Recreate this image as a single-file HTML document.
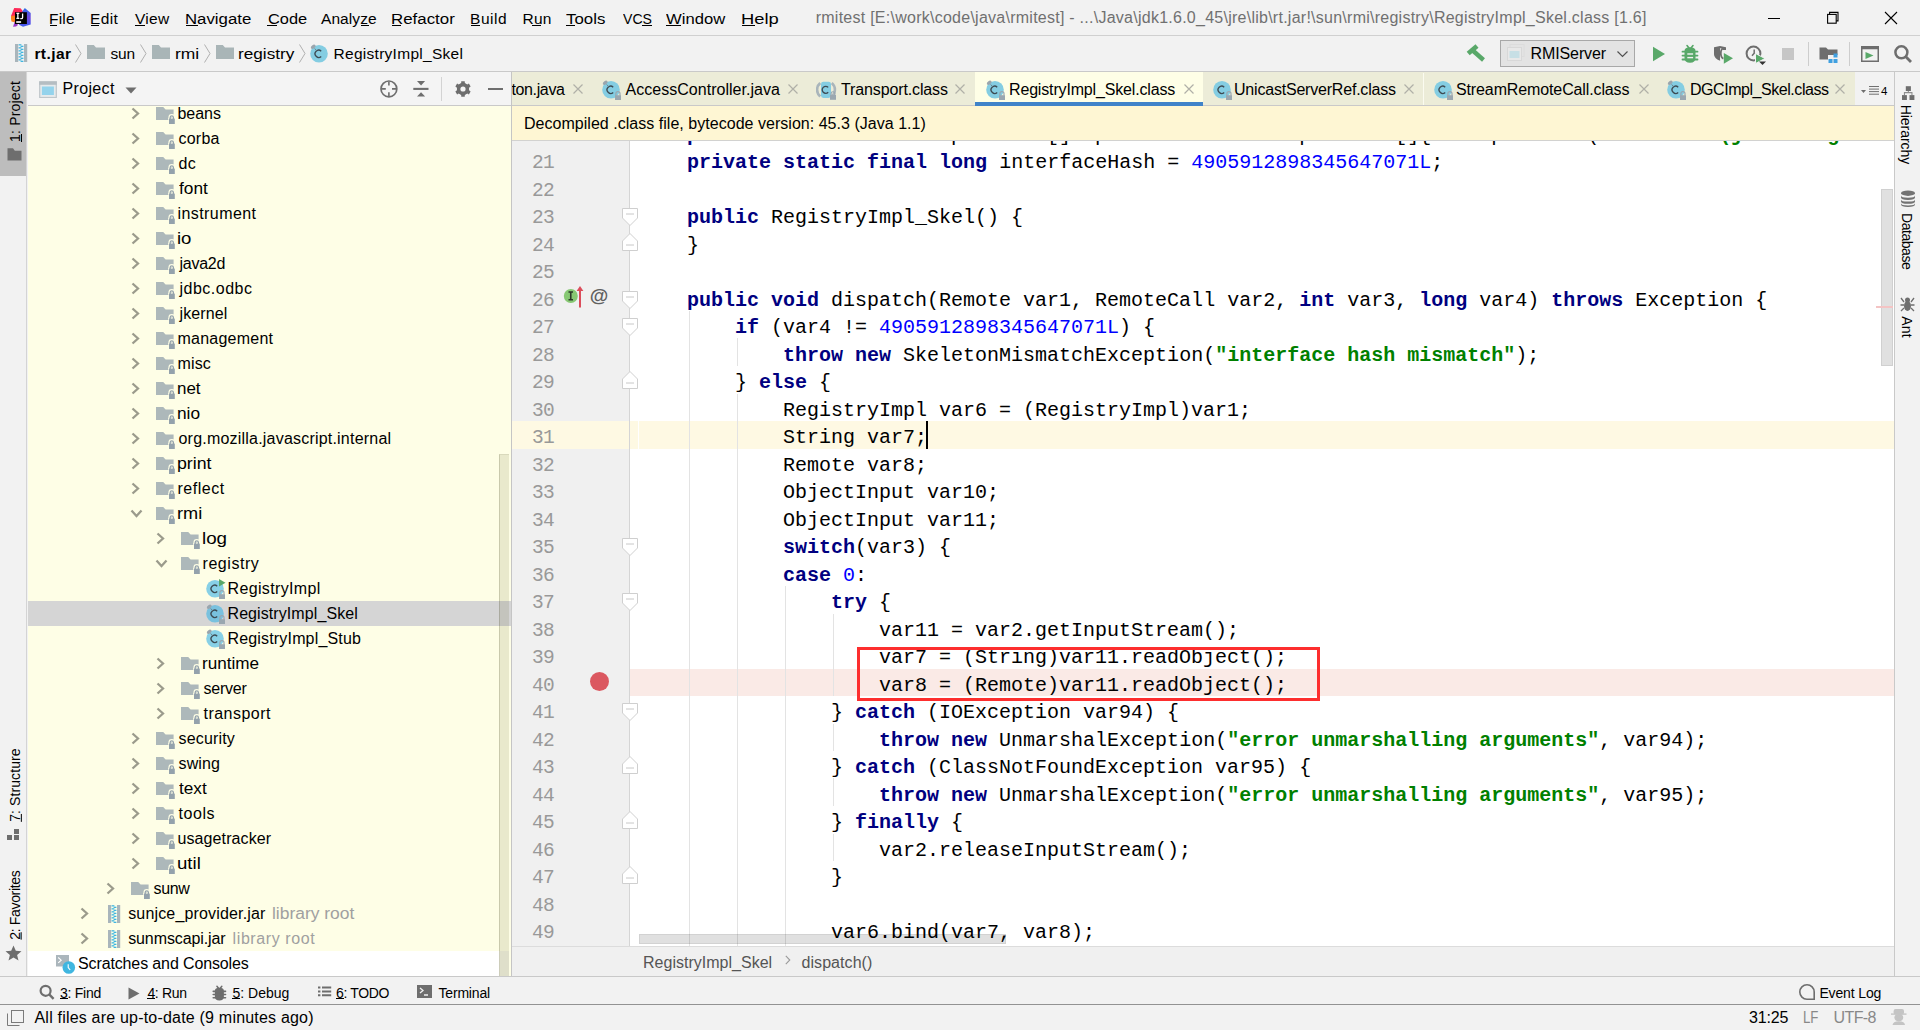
<!DOCTYPE html>
<html><head><meta charset='utf-8'><style>
*{margin:0;padding:0;box-sizing:border-box}
html,body{width:1920px;height:1030px;overflow:hidden;background:#f2f2f2}
body{position:relative;font-family:'Liberation Sans',sans-serif}
.b{position:absolute}
.t{position:absolute;white-space:nowrap;line-height:normal}
.code{position:absolute;font-family:'Liberation Mono',monospace;font-size:20px;white-space:pre;line-height:27.5px}
.k{color:#000080;font-weight:bold}
.n{color:#0000ff}
.s{color:#008000;font-weight:bold}
</style></head><body>
<div class="b" style="left:0px;top:0px;width:1920px;height:35px;background:#f2f2f2;"></div>
<div class="b" style="left:0px;top:35px;width:1920px;height:1px;background:#d0d0d0;"></div>
<svg class="b" style="left:6px;top:4px" width="30" height="28" viewBox="0 0 30 28">
<polygon points="8.2,4.1 14.5,4.3 17.8,8.2 9,12.5 5,12" fill="#fe2857"/>
<polygon points="5,12 9,11.5 9.5,18.5 5.5,17.5 5,15" fill="#fc801d"/>
<polygon points="9,17 12,21 10,22.5 7,22.8" fill="#9939c9"/>
<polygon points="18.8,4.1 24.7,9 24.7,20.4 17,22.8 13,20.8 16,8" fill="url(#lg2)"/>
<defs><linearGradient id="lg2" x1="0" y1="0" x2="0" y2="1"><stop offset="0" stop-color="#2a6ee8"/><stop offset="0.5" stop-color="#7047e0"/><stop offset="1" stop-color="#3d5cf0"/></linearGradient></defs>
<rect x="9" y="8.2" width="11.9" height="11.8" fill="#000"/>
<rect x="10.2" y="17.1" width="4.9" height="1.8" fill="#e8e8e8"/>
<path d="M10.4 9.4 H13.3 M11.85 9.4 V14.4 M10.4 14.4 H13.3 M16.6 9.4 V13.4 Q16.6 14.6 15.2 14.6 H14.3" fill="none" stroke="#fff" stroke-width="1.3"/>
</svg>
<span class="t" style="left:49.00px;top:10.37px;font-size:15.5px;color:#000;letter-spacing:0.215px;">File</span>
<span class="t" style="left:90.00px;top:10.37px;font-size:15.5px;color:#000;letter-spacing:0.366px;">Edit</span>
<span class="t" style="left:135.00px;top:10.37px;font-size:15.5px;color:#000;letter-spacing:0.293px;">View</span>
<span class="t" style="left:184.92px;top:10.37px;font-size:15.5px;color:#000;transform:scaleX(1.0830);transform-origin:0 0;">Navigate</span>
<span class="t" style="left:267.50px;top:10.37px;font-size:15.5px;color:#000;transform:scaleX(1.0567);transform-origin:0 0;">Code</span>
<span class="t" style="left:321.00px;top:10.37px;font-size:15.5px;color:#000;letter-spacing:0.080px;">Analyze</span>
<span class="t" style="left:390.91px;top:10.37px;font-size:15.5px;color:#000;transform:scaleX(1.0885);transform-origin:0 0;">Refactor</span>
<span class="t" style="left:470.00px;top:10.37px;font-size:15.5px;color:#000;letter-spacing:0.539px;">Build</span>
<span class="t" style="left:522.40px;top:10.37px;font-size:15.5px;color:#000;letter-spacing:0.293px;">Run</span>
<span class="t" style="left:566.40px;top:10.37px;font-size:15.5px;color:#000;transform:scaleX(1.0869);transform-origin:0 0;">Tools</span>
<span class="t" style="left:623.00px;top:10.37px;font-size:15.5px;color:#000;transform:scaleX(0.9070);transform-origin:0 0;">VCS</span>
<span class="t" style="left:666.00px;top:10.37px;font-size:15.5px;color:#000;transform:scaleX(1.0727);transform-origin:0 0;">Window</span>
<span class="t" style="left:740.82px;top:10.37px;font-size:15.5px;color:#000;transform:scaleX(1.1832);transform-origin:0 0;">Help</span>
<div class="b" style="left:50px;top:25px;width:7px;height:1px;background:#000;"></div>
<div class="b" style="left:91px;top:25px;width:8px;height:1px;background:#000;"></div>
<div class="b" style="left:135px;top:25px;width:10px;height:1px;background:#000;"></div>
<div class="b" style="left:186px;top:25px;width:12px;height:1px;background:#000;"></div>
<div class="b" style="left:267px;top:25px;width:10px;height:1px;background:#000;"></div>
<div class="b" style="left:361px;top:25px;width:8px;height:1px;background:#000;"></div>
<div class="b" style="left:392px;top:25px;width:9px;height:1px;background:#000;"></div>
<div class="b" style="left:471px;top:25px;width:9px;height:1px;background:#000;"></div>
<div class="b" style="left:532px;top:25px;width:9px;height:1px;background:#000;"></div>
<div class="b" style="left:566px;top:25px;width:9px;height:1px;background:#000;"></div>
<div class="b" style="left:642px;top:25px;width:10px;height:1px;background:#000;"></div>
<div class="b" style="left:666px;top:25px;width:15px;height:1px;background:#000;"></div>
<div class="b" style="left:742px;top:25px;width:13px;height:1px;background:#000;"></div>
<span class="t" style="left:815.70px;top:8.52px;font-size:16px;color:#707070;letter-spacing:0.254px;">rmitest [E:\work\code\java\rmitest] - ...\Java\jdk1.6.0_45\jre\lib\rt.jar!\sun\rmi\registry\RegistryImpl_Skel.class [1.6]</span>
<div class="b" style="left:1767.5px;top:18px;width:12.5px;height:1px;background:#000;"></div>
<svg class="b" style="left:1826px;top:11px" width="14" height="14" viewBox="0 0 14 14"><rect x="1.6" y="3.4" width="8.6" height="8.8" fill="none" stroke="#000" stroke-width="1.1"/><path d="M3.6 3.4 V1.4 H12 V9.9 H10.2" fill="none" stroke="#000" stroke-width="1.1"/></svg>
<svg class="b" style="left:1884px;top:11px" width="14" height="14" viewBox="0 0 14 14"><path d="M1 1 L13 13 M13 1 L1 13" stroke="#000" stroke-width="1.1"/></svg>
<div class="b" style="left:0px;top:36px;width:1920px;height:35px;background:#f2f2f2;"></div>
<div class="b" style="left:0px;top:71px;width:1920px;height:1px;background:#c9c9c9;"></div>
<svg class="b" style="left:15px;top:44px" width="13" height="18" viewBox="0 0 13 18"><rect x="0" y="0" width="3.2" height="18" fill="#a9b5bb"/><rect x="9" y="0" width="3.2" height="18" fill="#a9b5bb"/><rect x="3.6" y="0.20" width="2.8" height="1.3" fill="#40b6e0"/><rect x="5.6" y="1.70" width="2.8" height="1.3" fill="#40b6e0"/><rect x="3.6" y="3.20" width="2.8" height="1.3" fill="#40b6e0"/><rect x="5.6" y="4.70" width="2.8" height="1.3" fill="#40b6e0"/><rect x="3.6" y="6.20" width="2.8" height="1.3" fill="#40b6e0"/><rect x="5.6" y="7.70" width="2.8" height="1.3" fill="#40b6e0"/><rect x="3.6" y="9.20" width="2.8" height="1.3" fill="#40b6e0"/><rect x="5.6" y="10.70" width="2.8" height="1.3" fill="#40b6e0"/><rect x="3.6" y="12.20" width="2.8" height="1.3" fill="#40b6e0"/><rect x="5.6" y="13.70" width="2.8" height="1.3" fill="#40b6e0"/><rect x="3.6" y="15.20" width="2.8" height="1.3" fill="#40b6e0"/><rect x="5.6" y="16.70" width="2.8" height="1.3" fill="#40b6e0"/></svg>
<span class="t" style="left:34.40px;top:45.07px;font-size:15.5px;color:#000;font-weight:700;letter-spacing:0.435px;">rt.jar</span>
<svg class="b" style="left:75px;top:44px" width="7" height="19" viewBox="0 0 7 19"><path d="M0.5 0.5 L6 9.5 L0.5 18.5" fill="none" stroke="#b0b0b0" stroke-width="1"/></svg>
<svg class="b" style="left:87px;top:45px" width="18" height="14" viewBox="0 0 18 14"><path d="M0 0 H6.8 L9.0 2.5 H18 V14 H0 Z" fill="#a9b5b7"/></svg>
<span class="t" style="left:110.40px;top:45.07px;font-size:15.5px;color:#000;letter-spacing:-0.085px;">sun</span>
<svg class="b" style="left:140px;top:44px" width="7" height="19" viewBox="0 0 7 19"><path d="M0.5 0.5 L6 9.5 L0.5 18.5" fill="none" stroke="#b0b0b0" stroke-width="1"/></svg>
<svg class="b" style="left:152px;top:45px" width="18" height="14" viewBox="0 0 18 14"><path d="M0 0 H6.8 L9.0 2.5 H18 V14 H0 Z" fill="#a9b5b7"/></svg>
<span class="t" style="left:174.57px;top:45.07px;font-size:15.5px;color:#000;transform:scaleX(1.1259);transform-origin:0 0;">rmi</span>
<svg class="b" style="left:204px;top:44px" width="7" height="19" viewBox="0 0 7 19"><path d="M0.5 0.5 L6 9.5 L0.5 18.5" fill="none" stroke="#b0b0b0" stroke-width="1"/></svg>
<svg class="b" style="left:215.5px;top:45px" width="18" height="14" viewBox="0 0 18 14"><path d="M0 0 H6.8 L9.0 2.5 H18 V14 H0 Z" fill="#a9b5b7"/></svg>
<span class="t" style="left:238.39px;top:45.07px;font-size:15.5px;color:#000;transform:scaleX(1.1086);transform-origin:0 0;">registry</span>
<svg class="b" style="left:299px;top:44px" width="7" height="19" viewBox="0 0 7 19"><path d="M0.5 0.5 L6 9.5 L0.5 18.5" fill="none" stroke="#b0b0b0" stroke-width="1"/></svg>
<svg class="b" style="left:310px;top:44px" width="20" height="21" viewBox="0 0 20 21"><circle cx="9" cy="9.8" r="8.8" fill="#84cde2"/><path d="M11.2 7.2 A3.6 3.6 0 1 0 11.2 12.4" fill="none" stroke="#3d4b53" stroke-width="1.35"/><ellipse cx="3.2" cy="2.8" rx="2.7" ry="1.6" transform="rotate(-42 3.2 2.8)" fill="#9aa5ad"/><path d="M4.6 4.6 L6.6 6.4" stroke="#6b7b84" stroke-width="0.9"/></svg>
<span class="t" style="left:333.50px;top:45.07px;font-size:15.5px;color:#000;letter-spacing:0.284px;">RegistryImpl_Skel</span>
<svg class="b" style="left:1462px;top:41px" width="28" height="26" viewBox="0 0 28 26"><path d="M6.2 12.6 L15 5" stroke="#59a869" stroke-width="4.6"/><path d="M10.2 9 L21.5 19" stroke="#59a869" stroke-width="4.4"/></svg>
<div class="b" style="left:1500px;top:40px;width:135px;height:27px;background:#e3e3e3;border:1px solid #a8a8a8"></div>
<svg class="b" style="left:1507px;top:44px" width="18" height="17" viewBox="0 0 18 17"><rect x="3" y="0.5" width="14" height="12" fill="none" stroke="#dcdcdc"/><rect x="0.5" y="3.5" width="14" height="13" fill="#e8e8e8" stroke="#d8d8d8"/><rect x="2.5" y="7" width="10" height="7" fill="#c7dfe5"/></svg>
<span class="t" style="left:1530.50px;top:44.82px;font-size:16px;color:#000;letter-spacing:-0.103px;">RMIServer</span>
<svg class="b" style="left:1617px;top:51px" width="11" height="7" viewBox="0 0 11 7"><path d="M0.5 0.5 L5.5 5.5 L10.5 0.5" fill="none" stroke="#505050" stroke-width="1.2"/></svg>
<svg class="b" style="left:1652px;top:46px" width="14" height="16" viewBox="0 0 14 16"><polygon points="1,0.8 13,8 1,15.2" fill="#59a869"/></svg>
<svg class="b" style="left:1681px;top:44px" width="18" height="20" viewBox="0 0 18 20"><path d="M3.5 7 Q3.5 3.3 9 3.3 Q14.5 3.3 14.5 7 V14 Q14.5 18.8 9 18.8 Q3.5 18.8 3.5 14 Z" fill="#59a869"/><path d="M1.5 7.7 H16.5 M1.5 11.6 H16.5 M1.5 15.5 H16.5" stroke="#59a869" stroke-width="1.8" stroke-linecap="round"/><path d="M6 1.5 L8 4 M12 1.5 L10 4" stroke="#59a869" stroke-width="1.6" stroke-linecap="round"/><rect x="6.3" y="9.3" width="5.8" height="1.4" fill="#f2f2f2"/><rect x="6.3" y="12.9" width="5.8" height="1.4" fill="#f2f2f2"/></svg>
<svg class="b" style="left:1713px;top:45px" width="21" height="20" viewBox="0 0 21 20"><path d="M1 2.2 L7 1 L13 2.2 V5 H9.8 V3.8 L7 3.3 V13.5 C7 14 7.2 15.5 7.2 15.8 C3.8 14.6 1 12.4 1 9 Z" fill="#6e6e6e"/><path d="M10.5 3.6 C9 3.4 7.8 5 7.8 8.2 C7.8 11.5 9 13 10.4 13.6" fill="none" stroke="#6e6e6e" stroke-width="1.8"/><polygon points="10.8,8 20,13.3 10.8,18.8" fill="#59a869"/></svg>
<svg class="b" style="left:1745px;top:45px" width="22" height="21" viewBox="0 0 22 21"><circle cx="8.5" cy="8.5" r="6.9" fill="none" stroke="#6e6e6e" stroke-width="2"/><path d="M9.2 4.5 V8.2 L7 10.8" fill="none" stroke="#6e6e6e" stroke-width="1.5"/><polygon points="10.5,8.5 20,13.5 10.5,18.5" fill="#59a869" stroke="#f2f2f2" stroke-width="1"/><polygon points="14,16.5 21,16.5 17.5,20" fill="#333"/></svg>
<div class="b" style="left:1781.5px;top:47.5px;width:12.5px;height:12.5px;background:#c6c6c6;"></div>
<div class="b" style="left:1808px;top:42px;width:1px;height:24px;background:#cdcdcd;"></div>
<svg class="b" style="left:1819px;top:47px" width="20" height="17" viewBox="0 0 20 17"><path d="M0.5 0.5 H7 L9 2.5 H18.5 V12.5 H0.5 Z" fill="#6e6e6e"/><rect x="9" y="8" width="10" height="9" fill="#f2f2f2"/><rect x="14.5" y="6.5" width="4" height="4" fill="#40a0e0"/><rect x="9.5" y="12" width="4" height="4" fill="#40a0e0"/><rect x="14.5" y="12" width="4" height="4" fill="#40a0e0"/></svg>
<div class="b" style="left:1849px;top:42px;width:1px;height:24px;background:#cdcdcd;"></div>
<svg class="b" style="left:1861px;top:46px" width="18" height="16" viewBox="0 0 18 16"><rect x="0.75" y="0.75" width="16.5" height="14.5" fill="none" stroke="#6e6e6e" stroke-width="1.5"/><rect x="0.75" y="0.75" width="16.5" height="2.5" fill="#6e6e6e"/><polygon points="4.5,6 12.5,9.5 4.5,13" fill="#59a869"/></svg>
<svg class="b" style="left:1893px;top:44px" width="20" height="20" viewBox="0 0 20 20"><circle cx="8.4" cy="8.3" r="6" fill="none" stroke="#6e6e6e" stroke-width="2.5"/><path d="M12.6 12.6 L18 18" stroke="#6e6e6e" stroke-width="2.8"/></svg>
<div class="b" style="left:0px;top:72px;width:27px;height:904px;background:#f2f2f2;"></div>
<div class="b" style="left:26px;top:72px;width:1px;height:904px;background:#d4d4d4;"></div>
<div class="b" style="left:0px;top:72px;width:26px;height:104px;background:#bdbdbd;"></div>
<div class="b" style="left:-15.50px;top:101.00px;width:60.00px;height:20px;transform:rotate(-90deg)"><span class="t" style="left:-1.00px;top:2.23px;font-size:14px;letter-spacing:0.195px;color:#000"><u>1</u>: Project</span></div>
<svg class="b" style="left:7px;top:148px" width="15" height="13" viewBox="0 0 15 13"><path d="M0.5 0.3 H6 L7.8 2.8 H14.5 V12.5 H0.5 Z" fill="#6e6e6e"/></svg>
<div class="b" style="left:-22.35px;top:774.65px;width:73.70px;height:20px;transform:rotate(-90deg)"><span class="t" style="left:0.00px;top:2.23px;font-size:14px;letter-spacing:0.102px;color:#000"><u>7</u>: Structure</span></div>
<svg class="b" style="left:6px;top:828px" width="14" height="14" viewBox="0 0 14 14"><rect x="1" y="7" width="5" height="5" fill="#6e6e6e"/><rect x="8" y="7" width="5" height="5" fill="#6e6e6e"/><rect x="8" y="1" width="5" height="5" fill="#6e6e6e"/></svg>
<div class="b" style="left:-20.15px;top:895.25px;width:69.30px;height:20px;transform:rotate(-90deg)"><span class="t" style="left:0.00px;top:2.23px;font-size:14px;letter-spacing:-0.349px;color:#000"><u>2</u>: Favorites</span></div>
<svg class="b" style="left:5px;top:945px" width="17" height="16" viewBox="0 0 17 16"><polygon points="8.5,0.5 10.8,5.8 16.5,6.2 12.1,9.9 13.5,15.5 8.5,12.5 3.5,15.5 4.9,9.9 0.5,6.2 6.2,5.8" fill="#6e6e6e"/></svg>
<div class="b" style="left:28px;top:72px;width:483px;height:33px;background:#f4f4f4;"></div>
<div class="b" style="left:28px;top:105px;width:483px;height:1px;background:#c9c9c9;"></div>
<svg class="b" style="left:39px;top:81px" width="18" height="17" viewBox="0 0 18 17"><rect x="0.7" y="0.9" width="16.6" height="15.6" fill="#e6eaec" stroke="#bfc6ca" stroke-width="1.2"/><rect x="0.2" y="0.4" width="17.6" height="3.4" fill="#b5bdc2"/><rect x="2.9" y="5.5" width="12" height="8.5" fill="#94d3ec"/></svg>
<span class="t" style="left:62.50px;top:80.02px;font-size:16px;color:#000;letter-spacing:0.341px;">Project</span>
<svg class="b" style="left:125px;top:87px" width="12" height="7" viewBox="0 0 12 7"><polygon points="0.5,0.5 11.5,0.5 6,6.5" fill="#6e6e6e"/></svg>
<svg class="b" style="left:379px;top:79px" width="20" height="20" viewBox="0 0 20 20"><circle cx="9.9" cy="9.9" r="7.9" fill="none" stroke="#6e6e6e" stroke-width="1.7"/><path d="M9.9 2.8 V6.5 M9.9 13.3 V17 M2.8 9.9 H6.8 M13 9.9 H17" stroke="#6e6e6e" stroke-width="1.6"/></svg>
<svg class="b" style="left:412px;top:80px" width="18" height="18" viewBox="0 0 18 18"><path d="M1.3 8.9 H16.5" stroke="#6e6e6e" stroke-width="2.1"/><polygon points="5,1.1 13.1,1.1 9.05,5.5" fill="#6e6e6e"/><polygon points="5,16.6 13.1,16.6 9.05,12.2" fill="#6e6e6e"/></svg>
<div class="b" style="left:441px;top:77px;width:1px;height:24px;background:#d3d3d3;"></div>
<svg class="b" style="left:455px;top:81px" width="16" height="16" viewBox="0 0 16 16"><path d="M14.05 9.37 L15.63 10.39 L13.89 13.42 L12.21 12.55 L9.83 13.92 L9.75 15.81 L6.25 15.81 L6.17 13.92 L3.79 12.55 L2.11 13.42 L0.37 10.39 L1.95 9.37 L1.95 6.63 L0.37 5.61 L2.11 2.58 L3.79 3.45 L6.17 2.08 L6.25 0.19 L9.75 0.19 L9.83 2.08 L12.21 3.45 L13.89 2.58 L15.63 5.61 L14.05 6.63 Z" fill="#6e6e6e"/><circle cx="8" cy="8" r="5.8" fill="#6e6e6e"/><circle cx="8" cy="8" r="2.6" fill="#f4f4f4"/></svg>
<div class="b" style="left:487.5px;top:88px;width:15px;height:2px;background:#6e6e6e;"></div>
<div class="b" style="left:28px;top:106px;width:483px;height:870px;background:#fefee6;"></div>
<svg class="b" style="left:130.8px;top:107px" width="9" height="13" viewBox="0 0 9 13"><path d="M1.5 1.5 L7 6.5 L1.5 11.5" fill="none" stroke="#9b9b8c" stroke-width="2.3"/></svg>
<svg class="b" style="left:156px;top:107px" width="20" height="18" viewBox="0 0 20 18"><path d="M0 0 H7.2 L9.6 2.6 H17.6 V13 H0 Z" fill="#adb8ba"/><path d="M13.9 12 V10.4 A1.9 1.9 0 0 1 17.7 10.4 V12" fill="none" stroke="#fefee6" stroke-width="3"/><rect x="12.3" y="11" width="7" height="6.6" fill="#fefee6"/><path d="M14.2 12 V10.5 A1.6 1.6 0 0 1 17.4 10.5 V12" fill="none" stroke="#94a2ac" stroke-width="1.3"/><rect x="13" y="11.6" width="5.8" height="5.4" fill="#94a2ac"/></svg>
<span class="t" style="left:177.50px;top:104.52px;font-size:16px;color:#000;letter-spacing:-0.048px;">beans</span>
<svg class="b" style="left:130.8px;top:132px" width="9" height="13" viewBox="0 0 9 13"><path d="M1.5 1.5 L7 6.5 L1.5 11.5" fill="none" stroke="#9b9b8c" stroke-width="2.3"/></svg>
<svg class="b" style="left:156px;top:132px" width="20" height="18" viewBox="0 0 20 18"><path d="M0 0 H7.2 L9.6 2.6 H17.6 V13 H0 Z" fill="#adb8ba"/><path d="M13.9 12 V10.4 A1.9 1.9 0 0 1 17.7 10.4 V12" fill="none" stroke="#fefee6" stroke-width="3"/><rect x="12.3" y="11" width="7" height="6.6" fill="#fefee6"/><path d="M14.2 12 V10.5 A1.6 1.6 0 0 1 17.4 10.5 V12" fill="none" stroke="#94a2ac" stroke-width="1.3"/><rect x="13" y="11.6" width="5.8" height="5.4" fill="#94a2ac"/></svg>
<span class="t" style="left:178.50px;top:129.52px;font-size:16px;color:#000;letter-spacing:0.219px;">corba</span>
<svg class="b" style="left:130.8px;top:157px" width="9" height="13" viewBox="0 0 9 13"><path d="M1.5 1.5 L7 6.5 L1.5 11.5" fill="none" stroke="#9b9b8c" stroke-width="2.3"/></svg>
<svg class="b" style="left:156px;top:157px" width="20" height="18" viewBox="0 0 20 18"><path d="M0 0 H7.2 L9.6 2.6 H17.6 V13 H0 Z" fill="#adb8ba"/><path d="M13.9 12 V10.4 A1.9 1.9 0 0 1 17.7 10.4 V12" fill="none" stroke="#fefee6" stroke-width="3"/><rect x="12.3" y="11" width="7" height="6.6" fill="#fefee6"/><path d="M14.2 12 V10.5 A1.6 1.6 0 0 1 17.4 10.5 V12" fill="none" stroke="#94a2ac" stroke-width="1.3"/><rect x="13" y="11.6" width="5.8" height="5.4" fill="#94a2ac"/></svg>
<span class="t" style="left:178.50px;top:154.52px;font-size:16px;color:#000;letter-spacing:0.302px;">dc</span>
<svg class="b" style="left:130.8px;top:182px" width="9" height="13" viewBox="0 0 9 13"><path d="M1.5 1.5 L7 6.5 L1.5 11.5" fill="none" stroke="#9b9b8c" stroke-width="2.3"/></svg>
<svg class="b" style="left:156px;top:182px" width="20" height="18" viewBox="0 0 20 18"><path d="M0 0 H7.2 L9.6 2.6 H17.6 V13 H0 Z" fill="#adb8ba"/><path d="M13.9 12 V10.4 A1.9 1.9 0 0 1 17.7 10.4 V12" fill="none" stroke="#fefee6" stroke-width="3"/><rect x="12.3" y="11" width="7" height="6.6" fill="#fefee6"/><path d="M14.2 12 V10.5 A1.6 1.6 0 0 1 17.4 10.5 V12" fill="none" stroke="#94a2ac" stroke-width="1.3"/><rect x="13" y="11.6" width="5.8" height="5.4" fill="#94a2ac"/></svg>
<span class="t" style="left:178.50px;top:179.52px;font-size:16px;color:#000;transform:scaleX(1.0792);transform-origin:0 0;">font</span>
<svg class="b" style="left:130.8px;top:207px" width="9" height="13" viewBox="0 0 9 13"><path d="M1.5 1.5 L7 6.5 L1.5 11.5" fill="none" stroke="#9b9b8c" stroke-width="2.3"/></svg>
<svg class="b" style="left:156px;top:207px" width="20" height="18" viewBox="0 0 20 18"><path d="M0 0 H7.2 L9.6 2.6 H17.6 V13 H0 Z" fill="#adb8ba"/><path d="M13.9 12 V10.4 A1.9 1.9 0 0 1 17.7 10.4 V12" fill="none" stroke="#fefee6" stroke-width="3"/><rect x="12.3" y="11" width="7" height="6.6" fill="#fefee6"/><path d="M14.2 12 V10.5 A1.6 1.6 0 0 1 17.4 10.5 V12" fill="none" stroke="#94a2ac" stroke-width="1.3"/><rect x="13" y="11.6" width="5.8" height="5.4" fill="#94a2ac"/></svg>
<span class="t" style="left:177.50px;top:204.52px;font-size:16px;color:#000;letter-spacing:0.428px;">instrument</span>
<svg class="b" style="left:130.8px;top:232px" width="9" height="13" viewBox="0 0 9 13"><path d="M1.5 1.5 L7 6.5 L1.5 11.5" fill="none" stroke="#9b9b8c" stroke-width="2.3"/></svg>
<svg class="b" style="left:156px;top:232px" width="20" height="18" viewBox="0 0 20 18"><path d="M0 0 H7.2 L9.6 2.6 H17.6 V13 H0 Z" fill="#adb8ba"/><path d="M13.9 12 V10.4 A1.9 1.9 0 0 1 17.7 10.4 V12" fill="none" stroke="#fefee6" stroke-width="3"/><rect x="12.3" y="11" width="7" height="6.6" fill="#fefee6"/><path d="M14.2 12 V10.5 A1.6 1.6 0 0 1 17.4 10.5 V12" fill="none" stroke="#94a2ac" stroke-width="1.3"/><rect x="13" y="11.6" width="5.8" height="5.4" fill="#94a2ac"/></svg>
<span class="t" style="left:177.34px;top:229.52px;font-size:16px;color:#000;transform:scaleX(1.1597);transform-origin:0 0;">io</span>
<svg class="b" style="left:130.8px;top:257px" width="9" height="13" viewBox="0 0 9 13"><path d="M1.5 1.5 L7 6.5 L1.5 11.5" fill="none" stroke="#9b9b8c" stroke-width="2.3"/></svg>
<svg class="b" style="left:156px;top:257px" width="20" height="18" viewBox="0 0 20 18"><path d="M0 0 H7.2 L9.6 2.6 H17.6 V13 H0 Z" fill="#adb8ba"/><path d="M13.9 12 V10.4 A1.9 1.9 0 0 1 17.7 10.4 V12" fill="none" stroke="#fefee6" stroke-width="3"/><rect x="12.3" y="11" width="7" height="6.6" fill="#fefee6"/><path d="M14.2 12 V10.5 A1.6 1.6 0 0 1 17.4 10.5 V12" fill="none" stroke="#94a2ac" stroke-width="1.3"/><rect x="13" y="11.6" width="5.8" height="5.4" fill="#94a2ac"/></svg>
<span class="t" style="left:179.50px;top:254.52px;font-size:16px;color:#000;letter-spacing:-0.270px;">java2d</span>
<svg class="b" style="left:130.8px;top:282px" width="9" height="13" viewBox="0 0 9 13"><path d="M1.5 1.5 L7 6.5 L1.5 11.5" fill="none" stroke="#9b9b8c" stroke-width="2.3"/></svg>
<svg class="b" style="left:156px;top:282px" width="20" height="18" viewBox="0 0 20 18"><path d="M0 0 H7.2 L9.6 2.6 H17.6 V13 H0 Z" fill="#adb8ba"/><path d="M13.9 12 V10.4 A1.9 1.9 0 0 1 17.7 10.4 V12" fill="none" stroke="#fefee6" stroke-width="3"/><rect x="12.3" y="11" width="7" height="6.6" fill="#fefee6"/><path d="M14.2 12 V10.5 A1.6 1.6 0 0 1 17.4 10.5 V12" fill="none" stroke="#94a2ac" stroke-width="1.3"/><rect x="13" y="11.6" width="5.8" height="5.4" fill="#94a2ac"/></svg>
<span class="t" style="left:179.50px;top:279.52px;font-size:16px;color:#000;letter-spacing:0.501px;">jdbc.odbc</span>
<svg class="b" style="left:130.8px;top:307px" width="9" height="13" viewBox="0 0 9 13"><path d="M1.5 1.5 L7 6.5 L1.5 11.5" fill="none" stroke="#9b9b8c" stroke-width="2.3"/></svg>
<svg class="b" style="left:156px;top:307px" width="20" height="18" viewBox="0 0 20 18"><path d="M0 0 H7.2 L9.6 2.6 H17.6 V13 H0 Z" fill="#adb8ba"/><path d="M13.9 12 V10.4 A1.9 1.9 0 0 1 17.7 10.4 V12" fill="none" stroke="#fefee6" stroke-width="3"/><rect x="12.3" y="11" width="7" height="6.6" fill="#fefee6"/><path d="M14.2 12 V10.5 A1.6 1.6 0 0 1 17.4 10.5 V12" fill="none" stroke="#94a2ac" stroke-width="1.3"/><rect x="13" y="11.6" width="5.8" height="5.4" fill="#94a2ac"/></svg>
<span class="t" style="left:179.50px;top:304.52px;font-size:16px;color:#000;letter-spacing:0.120px;">jkernel</span>
<svg class="b" style="left:130.8px;top:332px" width="9" height="13" viewBox="0 0 9 13"><path d="M1.5 1.5 L7 6.5 L1.5 11.5" fill="none" stroke="#9b9b8c" stroke-width="2.3"/></svg>
<svg class="b" style="left:156px;top:332px" width="20" height="18" viewBox="0 0 20 18"><path d="M0 0 H7.2 L9.6 2.6 H17.6 V13 H0 Z" fill="#adb8ba"/><path d="M13.9 12 V10.4 A1.9 1.9 0 0 1 17.7 10.4 V12" fill="none" stroke="#fefee6" stroke-width="3"/><rect x="12.3" y="11" width="7" height="6.6" fill="#fefee6"/><path d="M14.2 12 V10.5 A1.6 1.6 0 0 1 17.4 10.5 V12" fill="none" stroke="#94a2ac" stroke-width="1.3"/><rect x="13" y="11.6" width="5.8" height="5.4" fill="#94a2ac"/></svg>
<span class="t" style="left:177.50px;top:329.52px;font-size:16px;color:#000;letter-spacing:0.239px;">management</span>
<svg class="b" style="left:130.8px;top:357px" width="9" height="13" viewBox="0 0 9 13"><path d="M1.5 1.5 L7 6.5 L1.5 11.5" fill="none" stroke="#9b9b8c" stroke-width="2.3"/></svg>
<svg class="b" style="left:156px;top:357px" width="20" height="18" viewBox="0 0 20 18"><path d="M0 0 H7.2 L9.6 2.6 H17.6 V13 H0 Z" fill="#adb8ba"/><path d="M13.9 12 V10.4 A1.9 1.9 0 0 1 17.7 10.4 V12" fill="none" stroke="#fefee6" stroke-width="3"/><rect x="12.3" y="11" width="7" height="6.6" fill="#fefee6"/><path d="M14.2 12 V10.5 A1.6 1.6 0 0 1 17.4 10.5 V12" fill="none" stroke="#94a2ac" stroke-width="1.3"/><rect x="13" y="11.6" width="5.8" height="5.4" fill="#94a2ac"/></svg>
<span class="t" style="left:177.50px;top:354.52px;font-size:16px;color:#000;letter-spacing:0.122px;">misc</span>
<svg class="b" style="left:130.8px;top:382px" width="9" height="13" viewBox="0 0 9 13"><path d="M1.5 1.5 L7 6.5 L1.5 11.5" fill="none" stroke="#9b9b8c" stroke-width="2.3"/></svg>
<svg class="b" style="left:156px;top:382px" width="20" height="18" viewBox="0 0 20 18"><path d="M0 0 H7.2 L9.6 2.6 H17.6 V13 H0 Z" fill="#adb8ba"/><path d="M13.9 12 V10.4 A1.9 1.9 0 0 1 17.7 10.4 V12" fill="none" stroke="#fefee6" stroke-width="3"/><rect x="12.3" y="11" width="7" height="6.6" fill="#fefee6"/><path d="M14.2 12 V10.5 A1.6 1.6 0 0 1 17.4 10.5 V12" fill="none" stroke="#94a2ac" stroke-width="1.3"/><rect x="13" y="11.6" width="5.8" height="5.4" fill="#94a2ac"/></svg>
<span class="t" style="left:177.44px;top:379.52px;font-size:16px;color:#000;transform:scaleX(1.0598);transform-origin:0 0;">net</span>
<svg class="b" style="left:130.8px;top:407px" width="9" height="13" viewBox="0 0 9 13"><path d="M1.5 1.5 L7 6.5 L1.5 11.5" fill="none" stroke="#9b9b8c" stroke-width="2.3"/></svg>
<svg class="b" style="left:156px;top:407px" width="20" height="18" viewBox="0 0 20 18"><path d="M0 0 H7.2 L9.6 2.6 H17.6 V13 H0 Z" fill="#adb8ba"/><path d="M13.9 12 V10.4 A1.9 1.9 0 0 1 17.7 10.4 V12" fill="none" stroke="#fefee6" stroke-width="3"/><rect x="12.3" y="11" width="7" height="6.6" fill="#fefee6"/><path d="M14.2 12 V10.5 A1.6 1.6 0 0 1 17.4 10.5 V12" fill="none" stroke="#94a2ac" stroke-width="1.3"/><rect x="13" y="11.6" width="5.8" height="5.4" fill="#94a2ac"/></svg>
<span class="t" style="left:177.42px;top:404.52px;font-size:16px;color:#000;transform:scaleX(1.0805);transform-origin:0 0;">nio</span>
<svg class="b" style="left:130.8px;top:432px" width="9" height="13" viewBox="0 0 9 13"><path d="M1.5 1.5 L7 6.5 L1.5 11.5" fill="none" stroke="#9b9b8c" stroke-width="2.3"/></svg>
<svg class="b" style="left:156px;top:432px" width="20" height="18" viewBox="0 0 20 18"><path d="M0 0 H7.2 L9.6 2.6 H17.6 V13 H0 Z" fill="#adb8ba"/><path d="M13.9 12 V10.4 A1.9 1.9 0 0 1 17.7 10.4 V12" fill="none" stroke="#fefee6" stroke-width="3"/><rect x="12.3" y="11" width="7" height="6.6" fill="#fefee6"/><path d="M14.2 12 V10.5 A1.6 1.6 0 0 1 17.4 10.5 V12" fill="none" stroke="#94a2ac" stroke-width="1.3"/><rect x="13" y="11.6" width="5.8" height="5.4" fill="#94a2ac"/></svg>
<span class="t" style="left:178.50px;top:429.52px;font-size:16px;color:#000;letter-spacing:0.208px;">org.mozilla.javascript.internal</span>
<svg class="b" style="left:130.8px;top:457px" width="9" height="13" viewBox="0 0 9 13"><path d="M1.5 1.5 L7 6.5 L1.5 11.5" fill="none" stroke="#9b9b8c" stroke-width="2.3"/></svg>
<svg class="b" style="left:156px;top:457px" width="20" height="18" viewBox="0 0 20 18"><path d="M0 0 H7.2 L9.6 2.6 H17.6 V13 H0 Z" fill="#adb8ba"/><path d="M13.9 12 V10.4 A1.9 1.9 0 0 1 17.7 10.4 V12" fill="none" stroke="#fefee6" stroke-width="3"/><rect x="12.3" y="11" width="7" height="6.6" fill="#fefee6"/><path d="M14.2 12 V10.5 A1.6 1.6 0 0 1 17.4 10.5 V12" fill="none" stroke="#94a2ac" stroke-width="1.3"/><rect x="13" y="11.6" width="5.8" height="5.4" fill="#94a2ac"/></svg>
<span class="t" style="left:177.39px;top:454.52px;font-size:16px;color:#000;transform:scaleX(1.1082);transform-origin:0 0;">print</span>
<svg class="b" style="left:130.8px;top:482px" width="9" height="13" viewBox="0 0 9 13"><path d="M1.5 1.5 L7 6.5 L1.5 11.5" fill="none" stroke="#9b9b8c" stroke-width="2.3"/></svg>
<svg class="b" style="left:156px;top:482px" width="20" height="18" viewBox="0 0 20 18"><path d="M0 0 H7.2 L9.6 2.6 H17.6 V13 H0 Z" fill="#adb8ba"/><path d="M13.9 12 V10.4 A1.9 1.9 0 0 1 17.7 10.4 V12" fill="none" stroke="#fefee6" stroke-width="3"/><rect x="12.3" y="11" width="7" height="6.6" fill="#fefee6"/><path d="M14.2 12 V10.5 A1.6 1.6 0 0 1 17.4 10.5 V12" fill="none" stroke="#94a2ac" stroke-width="1.3"/><rect x="13" y="11.6" width="5.8" height="5.4" fill="#94a2ac"/></svg>
<span class="t" style="left:177.50px;top:479.52px;font-size:16px;color:#000;letter-spacing:0.537px;">reflect</span>
<svg class="b" style="left:130px;top:509px" width="13" height="9" viewBox="0 0 13 9"><path d="M1.5 1.5 L6.5 7 L11.5 1.5" fill="none" stroke="#9b9b8c" stroke-width="2.3"/></svg>
<svg class="b" style="left:156px;top:507px" width="20" height="18" viewBox="0 0 20 18"><path d="M0 0 H7.2 L9.6 2.6 H17.6 V13 H0 Z" fill="#adb8ba"/><path d="M13.9 12 V10.4 A1.9 1.9 0 0 1 17.7 10.4 V12" fill="none" stroke="#fefee6" stroke-width="3"/><rect x="12.3" y="11" width="7" height="6.6" fill="#fefee6"/><path d="M14.2 12 V10.5 A1.6 1.6 0 0 1 17.4 10.5 V12" fill="none" stroke="#94a2ac" stroke-width="1.3"/><rect x="13" y="11.6" width="5.8" height="5.4" fill="#94a2ac"/></svg>
<span class="t" style="left:177.37px;top:504.52px;font-size:16px;color:#000;transform:scaleX(1.1328);transform-origin:0 0;">rmi</span>
<svg class="b" style="left:155.8px;top:532px" width="9" height="13" viewBox="0 0 9 13"><path d="M1.5 1.5 L7 6.5 L1.5 11.5" fill="none" stroke="#9b9b8c" stroke-width="2.3"/></svg>
<svg class="b" style="left:181px;top:532px" width="20" height="18" viewBox="0 0 20 18"><path d="M0 0 H7.2 L9.6 2.6 H17.6 V13 H0 Z" fill="#adb8ba"/><path d="M13.9 12 V10.4 A1.9 1.9 0 0 1 17.7 10.4 V12" fill="none" stroke="#fefee6" stroke-width="3"/><rect x="12.3" y="11" width="7" height="6.6" fill="#fefee6"/><path d="M14.2 12 V10.5 A1.6 1.6 0 0 1 17.4 10.5 V12" fill="none" stroke="#94a2ac" stroke-width="1.3"/><rect x="13" y="11.6" width="5.8" height="5.4" fill="#94a2ac"/></svg>
<span class="t" style="left:202.33px;top:529.52px;font-size:16px;color:#000;transform:scaleX(1.1720);transform-origin:0 0;">log</span>
<svg class="b" style="left:155px;top:559px" width="13" height="9" viewBox="0 0 13 9"><path d="M1.5 1.5 L6.5 7 L11.5 1.5" fill="none" stroke="#9b9b8c" stroke-width="2.3"/></svg>
<svg class="b" style="left:181px;top:557px" width="20" height="18" viewBox="0 0 20 18"><path d="M0 0 H7.2 L9.6 2.6 H17.6 V13 H0 Z" fill="#adb8ba"/><path d="M13.9 12 V10.4 A1.9 1.9 0 0 1 17.7 10.4 V12" fill="none" stroke="#fefee6" stroke-width="3"/><rect x="12.3" y="11" width="7" height="6.6" fill="#fefee6"/><path d="M14.2 12 V10.5 A1.6 1.6 0 0 1 17.4 10.5 V12" fill="none" stroke="#94a2ac" stroke-width="1.3"/><rect x="13" y="11.6" width="5.8" height="5.4" fill="#94a2ac"/></svg>
<span class="t" style="left:202.50px;top:554.52px;font-size:16px;color:#000;letter-spacing:0.550px;">registry</span>
<svg class="b" style="left:206px;top:579px" width="20" height="21" viewBox="0 0 20 21"><circle cx="9" cy="9.8" r="8.8" fill="#87d0e6"/><path d="M11.2 7.2 A3.6 3.6 0 1 0 11.2 12.4" fill="none" stroke="#3d4b53" stroke-width="1.35"/><path d="M13.9 15.5 V13.6 A2.05 2.05 0 0 1 18 13.6 V15.5" fill="none" stroke="#9aa7b0" stroke-width="1.2"/><rect x="13" y="15.2" width="6" height="4.8" fill="#9aa7b0"/><polygon points="13,0 19.5,3.8 13,7.6" fill="#59a869"/></svg>
<span class="t" style="left:227.50px;top:579.52px;font-size:16px;color:#000;letter-spacing:0.359px;">RegistryImpl</span>
<div class="b" style="left:28px;top:601px;width:483px;height:25px;background:#d5d5d5;"></div>
<svg class="b" style="left:206px;top:604px" width="20" height="21" viewBox="0 0 20 21"><circle cx="9" cy="9.8" r="8.8" fill="#79c1de"/><path d="M11.2 7.2 A3.6 3.6 0 1 0 11.2 12.4" fill="none" stroke="#3d4b53" stroke-width="1.35"/><ellipse cx="3.2" cy="2.8" rx="2.7" ry="1.6" transform="rotate(-42 3.2 2.8)" fill="#9aa5ad"/><path d="M4.6 4.6 L6.6 6.4" stroke="#6b7b84" stroke-width="0.9"/><path d="M13.9 15.5 V13.6 A2.05 2.05 0 0 1 18 13.6 V15.5" fill="none" stroke="#9aa7b0" stroke-width="1.2"/><rect x="13" y="15.2" width="6" height="4.8" fill="#9aa7b0"/></svg>
<span class="t" style="left:227.50px;top:604.52px;font-size:16px;color:#000;letter-spacing:0.083px;">RegistryImpl_Skel</span>
<svg class="b" style="left:206px;top:629px" width="20" height="21" viewBox="0 0 20 21"><circle cx="9" cy="9.8" r="8.8" fill="#87d0e6"/><path d="M11.2 7.2 A3.6 3.6 0 1 0 11.2 12.4" fill="none" stroke="#3d4b53" stroke-width="1.35"/><ellipse cx="3.2" cy="2.8" rx="2.7" ry="1.6" transform="rotate(-42 3.2 2.8)" fill="#9aa5ad"/><path d="M4.6 4.6 L6.6 6.4" stroke="#6b7b84" stroke-width="0.9"/><path d="M13.9 15.5 V13.6 A2.05 2.05 0 0 1 18 13.6 V15.5" fill="none" stroke="#9aa7b0" stroke-width="1.2"/><rect x="13" y="15.2" width="6" height="4.8" fill="#9aa7b0"/></svg>
<span class="t" style="left:227.50px;top:629.52px;font-size:16px;color:#000;letter-spacing:0.167px;">RegistryImpl_Stub</span>
<svg class="b" style="left:155.8px;top:657px" width="9" height="13" viewBox="0 0 9 13"><path d="M1.5 1.5 L7 6.5 L1.5 11.5" fill="none" stroke="#9b9b8c" stroke-width="2.3"/></svg>
<svg class="b" style="left:181px;top:657px" width="20" height="18" viewBox="0 0 20 18"><path d="M0 0 H7.2 L9.6 2.6 H17.6 V13 H0 Z" fill="#adb8ba"/><path d="M13.9 12 V10.4 A1.9 1.9 0 0 1 17.7 10.4 V12" fill="none" stroke="#fefee6" stroke-width="3"/><rect x="12.3" y="11" width="7" height="6.6" fill="#fefee6"/><path d="M14.2 12 V10.5 A1.6 1.6 0 0 1 17.4 10.5 V12" fill="none" stroke="#94a2ac" stroke-width="1.3"/><rect x="13" y="11.6" width="5.8" height="5.4" fill="#94a2ac"/></svg>
<span class="t" style="left:202.43px;top:654.52px;font-size:16px;color:#000;transform:scaleX(1.0695);transform-origin:0 0;">runtime</span>
<svg class="b" style="left:155.8px;top:682px" width="9" height="13" viewBox="0 0 9 13"><path d="M1.5 1.5 L7 6.5 L1.5 11.5" fill="none" stroke="#9b9b8c" stroke-width="2.3"/></svg>
<svg class="b" style="left:181px;top:682px" width="20" height="18" viewBox="0 0 20 18"><path d="M0 0 H7.2 L9.6 2.6 H17.6 V13 H0 Z" fill="#adb8ba"/><path d="M13.9 12 V10.4 A1.9 1.9 0 0 1 17.7 10.4 V12" fill="none" stroke="#fefee6" stroke-width="3"/><rect x="12.3" y="11" width="7" height="6.6" fill="#fefee6"/><path d="M14.2 12 V10.5 A1.6 1.6 0 0 1 17.4 10.5 V12" fill="none" stroke="#94a2ac" stroke-width="1.3"/><rect x="13" y="11.6" width="5.8" height="5.4" fill="#94a2ac"/></svg>
<span class="t" style="left:203.50px;top:679.52px;font-size:16px;color:#000;letter-spacing:-0.245px;">server</span>
<svg class="b" style="left:155.8px;top:707px" width="9" height="13" viewBox="0 0 9 13"><path d="M1.5 1.5 L7 6.5 L1.5 11.5" fill="none" stroke="#9b9b8c" stroke-width="2.3"/></svg>
<svg class="b" style="left:181px;top:707px" width="20" height="18" viewBox="0 0 20 18"><path d="M0 0 H7.2 L9.6 2.6 H17.6 V13 H0 Z" fill="#adb8ba"/><path d="M13.9 12 V10.4 A1.9 1.9 0 0 1 17.7 10.4 V12" fill="none" stroke="#fefee6" stroke-width="3"/><rect x="12.3" y="11" width="7" height="6.6" fill="#fefee6"/><path d="M14.2 12 V10.5 A1.6 1.6 0 0 1 17.4 10.5 V12" fill="none" stroke="#94a2ac" stroke-width="1.3"/><rect x="13" y="11.6" width="5.8" height="5.4" fill="#94a2ac"/></svg>
<span class="t" style="left:203.50px;top:704.52px;font-size:16px;color:#000;letter-spacing:0.476px;">transport</span>
<svg class="b" style="left:130.8px;top:732px" width="9" height="13" viewBox="0 0 9 13"><path d="M1.5 1.5 L7 6.5 L1.5 11.5" fill="none" stroke="#9b9b8c" stroke-width="2.3"/></svg>
<svg class="b" style="left:156px;top:732px" width="20" height="18" viewBox="0 0 20 18"><path d="M0 0 H7.2 L9.6 2.6 H17.6 V13 H0 Z" fill="#adb8ba"/><path d="M13.9 12 V10.4 A1.9 1.9 0 0 1 17.7 10.4 V12" fill="none" stroke="#fefee6" stroke-width="3"/><rect x="12.3" y="11" width="7" height="6.6" fill="#fefee6"/><path d="M14.2 12 V10.5 A1.6 1.6 0 0 1 17.4 10.5 V12" fill="none" stroke="#94a2ac" stroke-width="1.3"/><rect x="13" y="11.6" width="5.8" height="5.4" fill="#94a2ac"/></svg>
<span class="t" style="left:178.50px;top:729.52px;font-size:16px;color:#000;letter-spacing:0.168px;">security</span>
<svg class="b" style="left:130.8px;top:757px" width="9" height="13" viewBox="0 0 9 13"><path d="M1.5 1.5 L7 6.5 L1.5 11.5" fill="none" stroke="#9b9b8c" stroke-width="2.3"/></svg>
<svg class="b" style="left:156px;top:757px" width="20" height="18" viewBox="0 0 20 18"><path d="M0 0 H7.2 L9.6 2.6 H17.6 V13 H0 Z" fill="#adb8ba"/><path d="M13.9 12 V10.4 A1.9 1.9 0 0 1 17.7 10.4 V12" fill="none" stroke="#fefee6" stroke-width="3"/><rect x="12.3" y="11" width="7" height="6.6" fill="#fefee6"/><path d="M14.2 12 V10.5 A1.6 1.6 0 0 1 17.4 10.5 V12" fill="none" stroke="#94a2ac" stroke-width="1.3"/><rect x="13" y="11.6" width="5.8" height="5.4" fill="#94a2ac"/></svg>
<span class="t" style="left:178.50px;top:754.52px;font-size:16px;color:#000;letter-spacing:0.148px;">swing</span>
<svg class="b" style="left:130.8px;top:782px" width="9" height="13" viewBox="0 0 9 13"><path d="M1.5 1.5 L7 6.5 L1.5 11.5" fill="none" stroke="#9b9b8c" stroke-width="2.3"/></svg>
<svg class="b" style="left:156px;top:782px" width="20" height="18" viewBox="0 0 20 18"><path d="M0 0 H7.2 L9.6 2.6 H17.6 V13 H0 Z" fill="#adb8ba"/><path d="M13.9 12 V10.4 A1.9 1.9 0 0 1 17.7 10.4 V12" fill="none" stroke="#fefee6" stroke-width="3"/><rect x="12.3" y="11" width="7" height="6.6" fill="#fefee6"/><path d="M14.2 12 V10.5 A1.6 1.6 0 0 1 17.4 10.5 V12" fill="none" stroke="#94a2ac" stroke-width="1.3"/><rect x="13" y="11.6" width="5.8" height="5.4" fill="#94a2ac"/></svg>
<span class="t" style="left:178.50px;top:779.52px;font-size:16px;color:#000;transform:scaleX(1.0743);transform-origin:0 0;">text</span>
<svg class="b" style="left:130.8px;top:807px" width="9" height="13" viewBox="0 0 9 13"><path d="M1.5 1.5 L7 6.5 L1.5 11.5" fill="none" stroke="#9b9b8c" stroke-width="2.3"/></svg>
<svg class="b" style="left:156px;top:807px" width="20" height="18" viewBox="0 0 20 18"><path d="M0 0 H7.2 L9.6 2.6 H17.6 V13 H0 Z" fill="#adb8ba"/><path d="M13.9 12 V10.4 A1.9 1.9 0 0 1 17.7 10.4 V12" fill="none" stroke="#fefee6" stroke-width="3"/><rect x="12.3" y="11" width="7" height="6.6" fill="#fefee6"/><path d="M14.2 12 V10.5 A1.6 1.6 0 0 1 17.4 10.5 V12" fill="none" stroke="#94a2ac" stroke-width="1.3"/><rect x="13" y="11.6" width="5.8" height="5.4" fill="#94a2ac"/></svg>
<span class="t" style="left:178.50px;top:804.52px;font-size:16px;color:#000;letter-spacing:0.576px;">tools</span>
<svg class="b" style="left:130.8px;top:832px" width="9" height="13" viewBox="0 0 9 13"><path d="M1.5 1.5 L7 6.5 L1.5 11.5" fill="none" stroke="#9b9b8c" stroke-width="2.3"/></svg>
<svg class="b" style="left:156px;top:832px" width="20" height="18" viewBox="0 0 20 18"><path d="M0 0 H7.2 L9.6 2.6 H17.6 V13 H0 Z" fill="#adb8ba"/><path d="M13.9 12 V10.4 A1.9 1.9 0 0 1 17.7 10.4 V12" fill="none" stroke="#fefee6" stroke-width="3"/><rect x="12.3" y="11" width="7" height="6.6" fill="#fefee6"/><path d="M14.2 12 V10.5 A1.6 1.6 0 0 1 17.4 10.5 V12" fill="none" stroke="#94a2ac" stroke-width="1.3"/><rect x="13" y="11.6" width="5.8" height="5.4" fill="#94a2ac"/></svg>
<span class="t" style="left:177.50px;top:829.52px;font-size:16px;color:#000;letter-spacing:0.103px;">usagetracker</span>
<svg class="b" style="left:130.8px;top:857px" width="9" height="13" viewBox="0 0 9 13"><path d="M1.5 1.5 L7 6.5 L1.5 11.5" fill="none" stroke="#9b9b8c" stroke-width="2.3"/></svg>
<svg class="b" style="left:156px;top:857px" width="20" height="18" viewBox="0 0 20 18"><path d="M0 0 H7.2 L9.6 2.6 H17.6 V13 H0 Z" fill="#adb8ba"/><path d="M13.9 12 V10.4 A1.9 1.9 0 0 1 17.7 10.4 V12" fill="none" stroke="#fefee6" stroke-width="3"/><rect x="12.3" y="11" width="7" height="6.6" fill="#fefee6"/><path d="M14.2 12 V10.5 A1.6 1.6 0 0 1 17.4 10.5 V12" fill="none" stroke="#94a2ac" stroke-width="1.3"/><rect x="13" y="11.6" width="5.8" height="5.4" fill="#94a2ac"/></svg>
<span class="t" style="left:177.34px;top:854.52px;font-size:16px;color:#000;transform:scaleX(1.1641);transform-origin:0 0;">util</span>
<svg class="b" style="left:105.8px;top:882px" width="9" height="13" viewBox="0 0 9 13"><path d="M1.5 1.5 L7 6.5 L1.5 11.5" fill="none" stroke="#9b9b8c" stroke-width="2.3"/></svg>
<svg class="b" style="left:131px;top:882px" width="20" height="18" viewBox="0 0 20 18"><path d="M0 0 H7.2 L9.6 2.6 H17.6 V13 H0 Z" fill="#adb8ba"/><path d="M13.9 12 V10.4 A1.9 1.9 0 0 1 17.7 10.4 V12" fill="none" stroke="#fefee6" stroke-width="3"/><rect x="12.3" y="11" width="7" height="6.6" fill="#fefee6"/><path d="M14.2 12 V10.5 A1.6 1.6 0 0 1 17.4 10.5 V12" fill="none" stroke="#94a2ac" stroke-width="1.3"/><rect x="13" y="11.6" width="5.8" height="5.4" fill="#94a2ac"/></svg>
<span class="t" style="left:153.50px;top:879.52px;font-size:16px;color:#000;letter-spacing:-0.366px;">sunw</span>
<svg class="b" style="left:79.8px;top:907px" width="9" height="13" viewBox="0 0 9 13"><path d="M1.5 1.5 L7 6.5 L1.5 11.5" fill="none" stroke="#9b9b8c" stroke-width="2.3"/></svg>
<svg class="b" style="left:108px;top:905px" width="13" height="18" viewBox="0 0 13 18"><rect x="0" y="0" width="3.2" height="18" fill="#a9b5bb"/><rect x="9" y="0" width="3.2" height="18" fill="#a9b5bb"/><rect x="3.6" y="0.20" width="2.8" height="1.3" fill="#40b6e0"/><rect x="5.6" y="1.70" width="2.8" height="1.3" fill="#40b6e0"/><rect x="3.6" y="3.20" width="2.8" height="1.3" fill="#40b6e0"/><rect x="5.6" y="4.70" width="2.8" height="1.3" fill="#40b6e0"/><rect x="3.6" y="6.20" width="2.8" height="1.3" fill="#40b6e0"/><rect x="5.6" y="7.70" width="2.8" height="1.3" fill="#40b6e0"/><rect x="3.6" y="9.20" width="2.8" height="1.3" fill="#40b6e0"/><rect x="5.6" y="10.70" width="2.8" height="1.3" fill="#40b6e0"/><rect x="3.6" y="12.20" width="2.8" height="1.3" fill="#40b6e0"/><rect x="5.6" y="13.70" width="2.8" height="1.3" fill="#40b6e0"/><rect x="3.6" y="15.20" width="2.8" height="1.3" fill="#40b6e0"/><rect x="5.6" y="16.70" width="2.8" height="1.3" fill="#40b6e0"/></svg>
<span class="t" style="left:128.20px;top:904.52px;font-size:16px;color:#000;letter-spacing:0.163px;">sunjce_provider.jar</span>
<svg class="b" style="left:79.8px;top:932px" width="9" height="13" viewBox="0 0 9 13"><path d="M1.5 1.5 L7 6.5 L1.5 11.5" fill="none" stroke="#9b9b8c" stroke-width="2.3"/></svg>
<svg class="b" style="left:108px;top:930px" width="13" height="18" viewBox="0 0 13 18"><rect x="0" y="0" width="3.2" height="18" fill="#a9b5bb"/><rect x="9" y="0" width="3.2" height="18" fill="#a9b5bb"/><rect x="3.6" y="0.20" width="2.8" height="1.3" fill="#40b6e0"/><rect x="5.6" y="1.70" width="2.8" height="1.3" fill="#40b6e0"/><rect x="3.6" y="3.20" width="2.8" height="1.3" fill="#40b6e0"/><rect x="5.6" y="4.70" width="2.8" height="1.3" fill="#40b6e0"/><rect x="3.6" y="6.20" width="2.8" height="1.3" fill="#40b6e0"/><rect x="5.6" y="7.70" width="2.8" height="1.3" fill="#40b6e0"/><rect x="3.6" y="9.20" width="2.8" height="1.3" fill="#40b6e0"/><rect x="5.6" y="10.70" width="2.8" height="1.3" fill="#40b6e0"/><rect x="3.6" y="12.20" width="2.8" height="1.3" fill="#40b6e0"/><rect x="5.6" y="13.70" width="2.8" height="1.3" fill="#40b6e0"/><rect x="3.6" y="15.20" width="2.8" height="1.3" fill="#40b6e0"/><rect x="5.6" y="16.70" width="2.8" height="1.3" fill="#40b6e0"/></svg>
<span class="t" style="left:128.20px;top:929.52px;font-size:16px;color:#000;letter-spacing:-0.106px;">sunmscapi.jar</span>
<span class="t" style="left:272.11px;top:904.52px;font-size:16px;color:#a0a0a0;transform:scaleX(1.0887);transform-origin:0 0;">library root</span>
<span class="t" style="left:232.60px;top:929.52px;font-size:16px;color:#a0a0a0;letter-spacing:0.588px;">library root</span>
<div class="b" style="left:28px;top:951px;width:471px;height:25px;background:#ffffff;"></div>
<svg class="b" style="left:55px;top:954px" width="22" height="22" viewBox="0 0 22 22"><rect x="1" y="1" width="13" height="11.5" fill="#abb6bc"/><path d="M3.2 3.5 L6.2 6.2 L3.2 8.9" fill="none" stroke="#fff" stroke-width="1.1"/><circle cx="13.8" cy="13.5" r="6.3" fill="#40b6e0"/><path d="M13.2 10.2 V13.6 L15.2 16" fill="none" stroke="#fff" stroke-width="1.1"/></svg>
<span class="t" style="left:78.00px;top:954.52px;font-size:16px;color:#000;letter-spacing:-0.125px;">Scratches and Consoles</span>
<div class="b" style="left:499px;top:454px;width:10px;height:497px;background:rgba(70,70,10,0.115);border-left:1px solid rgba(40,40,10,0.16);border-top:1px solid rgba(40,40,10,0.08)"></div>
<div class="b" style="left:499px;top:951px;width:10px;height:25px;background:rgba(0,0,0,0.12);border-left:1px solid rgba(0,0,0,0.08)"></div>
<div class="b" style="left:511px;top:72px;width:1px;height:904px;background:#c5c5c5;"></div>
<div class="b" style="left:512px;top:72px;width:1382px;height:33px;background:#ececd8;"></div>
<div class="b" style="left:1855px;top:72px;width:39px;height:33px;background:#f2f2f2;"></div>
<div class="b" style="left:512px;top:105px;width:1382px;height:1px;background:#c9c9c9;"></div>
<div class="b" style="left:975px;top:72px;width:228px;height:33px;background:#fefee6;"></div>
<div class="b" style="left:975px;top:102px;width:228px;height:4px;background:#4083c9;"></div>
<div class="b" style="left:512px;top:72px;width:80px;height:33px;overflow:hidden">
<span class="t" style="left:-0.50px;top:8.92px;font-size:16px;color:#000;letter-spacing:-0.377px;">ton.java</span>
</div>
<svg class="b" style="left:573px;top:84px" width="10" height="10" viewBox="0 0 10 10"><path d="M0.5 0.5 L9.5 9.5 M9.5 0.5 L0.5 9.5" stroke="#b0b0a8" stroke-width="1.2"/></svg>
<svg class="b" style="left:602px;top:80px" width="20" height="21" viewBox="0 0 20 21"><circle cx="9" cy="9.8" r="8.8" fill="#84cde2"/><path d="M11.2 7.2 A3.6 3.6 0 1 0 11.2 12.4" fill="none" stroke="#3d4b53" stroke-width="1.35"/><ellipse cx="3.2" cy="2.8" rx="2.7" ry="1.6" transform="rotate(-42 3.2 2.8)" fill="#9aa5ad"/><path d="M4.6 4.6 L6.6 6.4" stroke="#6b7b84" stroke-width="0.9"/><path d="M13.9 15.5 V13.6 A2.05 2.05 0 0 1 18 13.6 V15.5" fill="none" stroke="#9aa7b0" stroke-width="1.2"/><rect x="13" y="15.2" width="6" height="4.8" fill="#9aa7b0"/></svg>
<span class="t" style="left:625.50px;top:80.92px;font-size:16px;color:#000;letter-spacing:0.028px;">AccessController.java</span>
<svg class="b" style="left:788px;top:84px" width="10" height="10" viewBox="0 0 10 10"><path d="M0.5 0.5 L9.5 9.5 M9.5 0.5 L0.5 9.5" stroke="#b0b0a8" stroke-width="1.2"/></svg>
<svg class="b" style="left:816px;top:80px" width="21" height="21" viewBox="0 0 21 21"><path d="M4.2 3 A9 9 0 0 0 4.2 16.6" fill="none" stroke="#a9b5bb" stroke-width="2.6"/><path d="M15.8 3 A9 9 0 0 1 15.8 16.6" fill="none" stroke="#a9b5bb" stroke-width="2.6"/><rect x="5" y="1.8" width="10" height="16.2" rx="2.4" fill="#84cde2"/><path d="M12.2 7.4 A3.5 3.5 0 1 0 12.2 12.3" fill="none" stroke="#3d4b53" stroke-width="1.35"/><path d="M15.1 15.2 V13.6 A1.85 1.85 0 0 1 18.8 13.6 V15.2" fill="none" stroke="#9aa7b0" stroke-width="1.1"/><rect x="14" y="15" width="6" height="4.8" fill="#9aa7b0"/></svg>
<span class="t" style="left:841.00px;top:80.92px;font-size:16px;color:#000;letter-spacing:-0.127px;">Transport.class</span>
<svg class="b" style="left:955px;top:84px" width="10" height="10" viewBox="0 0 10 10"><path d="M0.5 0.5 L9.5 9.5 M9.5 0.5 L0.5 9.5" stroke="#b0b0a8" stroke-width="1.2"/></svg>
<svg class="b" style="left:986px;top:80px" width="20" height="21" viewBox="0 0 20 21"><circle cx="9" cy="9.8" r="8.8" fill="#84cde2"/><path d="M11.2 7.2 A3.6 3.6 0 1 0 11.2 12.4" fill="none" stroke="#3d4b53" stroke-width="1.35"/><ellipse cx="3.2" cy="2.8" rx="2.7" ry="1.6" transform="rotate(-42 3.2 2.8)" fill="#9aa5ad"/><path d="M4.6 4.6 L6.6 6.4" stroke="#6b7b84" stroke-width="0.9"/><path d="M13.9 15.5 V13.6 A2.05 2.05 0 0 1 18 13.6 V15.5" fill="none" stroke="#9aa7b0" stroke-width="1.2"/><rect x="13" y="15.2" width="6" height="4.8" fill="#9aa7b0"/></svg>
<span class="t" style="left:1009.00px;top:80.92px;font-size:16px;color:#000;letter-spacing:-0.160px;">RegistryImpl_Skel.class</span>
<svg class="b" style="left:1183.5px;top:84px" width="10" height="10" viewBox="0 0 10 10"><path d="M0.5 0.5 L9.5 9.5 M9.5 0.5 L0.5 9.5" stroke="#b0b0a8" stroke-width="1.2"/></svg>
<svg class="b" style="left:1213px;top:80px" width="20" height="21" viewBox="0 0 20 21"><circle cx="9" cy="9.8" r="8.8" fill="#84cde2"/><path d="M11.2 7.2 A3.6 3.6 0 1 0 11.2 12.4" fill="none" stroke="#3d4b53" stroke-width="1.35"/><path d="M13.9 15.5 V13.6 A2.05 2.05 0 0 1 18 13.6 V15.5" fill="none" stroke="#9aa7b0" stroke-width="1.2"/><rect x="13" y="15.2" width="6" height="4.8" fill="#9aa7b0"/></svg>
<span class="t" style="left:1234.00px;top:80.92px;font-size:16px;color:#000;letter-spacing:-0.203px;">UnicastServerRef.class</span>
<svg class="b" style="left:1404px;top:84px" width="10" height="10" viewBox="0 0 10 10"><path d="M0.5 0.5 L9.5 9.5 M9.5 0.5 L0.5 9.5" stroke="#b0b0a8" stroke-width="1.2"/></svg>
<svg class="b" style="left:1434px;top:80px" width="20" height="21" viewBox="0 0 20 21"><circle cx="9" cy="9.8" r="8.8" fill="#84cde2"/><path d="M11.2 7.2 A3.6 3.6 0 1 0 11.2 12.4" fill="none" stroke="#3d4b53" stroke-width="1.35"/><path d="M13.9 15.5 V13.6 A2.05 2.05 0 0 1 18 13.6 V15.5" fill="none" stroke="#9aa7b0" stroke-width="1.2"/><rect x="13" y="15.2" width="6" height="4.8" fill="#9aa7b0"/></svg>
<span class="t" style="left:1456.00px;top:80.92px;font-size:16px;color:#000;letter-spacing:-0.122px;">StreamRemoteCall.class</span>
<svg class="b" style="left:1639px;top:84px" width="10" height="10" viewBox="0 0 10 10"><path d="M0.5 0.5 L9.5 9.5 M9.5 0.5 L0.5 9.5" stroke="#b0b0a8" stroke-width="1.2"/></svg>
<svg class="b" style="left:1667px;top:80px" width="20" height="21" viewBox="0 0 20 21"><circle cx="9" cy="9.8" r="8.8" fill="#84cde2"/><path d="M11.2 7.2 A3.6 3.6 0 1 0 11.2 12.4" fill="none" stroke="#3d4b53" stroke-width="1.35"/><ellipse cx="3.2" cy="2.8" rx="2.7" ry="1.6" transform="rotate(-42 3.2 2.8)" fill="#9aa5ad"/><path d="M4.6 4.6 L6.6 6.4" stroke="#6b7b84" stroke-width="0.9"/><path d="M13.9 15.5 V13.6 A2.05 2.05 0 0 1 18 13.6 V15.5" fill="none" stroke="#9aa7b0" stroke-width="1.2"/><rect x="13" y="15.2" width="6" height="4.8" fill="#9aa7b0"/></svg>
<span class="t" style="left:1690.00px;top:80.92px;font-size:16px;color:#000;letter-spacing:-0.453px;">DGCImpl_Skel.class</span>
<svg class="b" style="left:1835px;top:84px" width="10" height="10" viewBox="0 0 10 10"><path d="M0.5 0.5 L9.5 9.5 M9.5 0.5 L0.5 9.5" stroke="#b0b0a8" stroke-width="1.2"/></svg>
<div class="b" style="left:1423px;top:73px;width:1px;height:32px;background:#fbfbf0;"></div>
<svg class="b" style="left:1860px;top:84px" width="20" height="14" viewBox="0 0 20 14"><polygon points="1,6 6,6 3.5,9" fill="#6e6e6e"/><path d="M9 2.5 H19 M9 5.1 H19 M9 7.6 H19 M9 10.2 H19" stroke="#707070" stroke-width="1"/></svg>
<span class="t" style="left:1881.00px;top:84.59px;font-size:11.5px;color:#000;">4</span>
<div class="b" style="left:512px;top:106px;width:1382px;height:34px;background:#fef6d3;"></div>
<div class="b" style="left:512px;top:140px;width:1382px;height:1px;background:#d2d2d0;"></div>
<span class="t" style="left:524.00px;top:114.52px;font-size:16px;color:#000;letter-spacing:0.029px;">Decompiled .class file, bytecode version: 45.3 (Java 1.1)</span>
<div class="b" style="left:512px;top:141px;width:117px;height:805px;background:#f0f0f0;"></div>
<div class="b" style="left:629px;top:141px;width:1px;height:805px;background:#d5d5d5;"></div>
<div class="b" style="left:630px;top:141px;width:1264px;height:805px;background:#ffffff;"></div>
<div class="b" style="left:512px;top:421px;width:117px;height:28px;background:#fef9e3;"></div>
<div class="b" style="left:630px;top:421px;width:1264px;height:28px;background:#fef9e3;"></div>
<div class="b" style="left:638px;top:421px;width:1px;height:28px;background:#ffffff;"></div>
<div class="b" style="left:630px;top:669px;width:1264px;height:27px;background:#faeae6;"></div>
<div class="b" style="left:689px;top:311px;width:1px;height:635px;background:#e3e3e3;"></div>
<div class="b" style="left:737px;top:338px;width:1px;height:28px;background:#e3e3e3;"></div>
<div class="b" style="left:737px;top:394px;width:1px;height:552px;background:#e3e3e3;"></div>
<div class="b" style="left:785px;top:586px;width:1px;height:360px;background:#e3e3e3;"></div>
<div class="b" style="left:833px;top:614px;width:1px;height:82px;background:#e3e3e3;"></div>
<div class="b" style="left:833px;top:724px;width:1px;height:27px;background:#e3e3e3;"></div>
<div class="b" style="left:833px;top:778px;width:1px;height:28px;background:#e3e3e3;"></div>
<div class="b" style="left:833px;top:834px;width:1px;height:27px;background:#e3e3e3;"></div>
<div class="b" style="left:639px;top:934px;width:367px;height:10px;background:rgba(0,0,0,0.12);border:1px solid rgba(0,0,0,0.06)"></div>
<div class="b" style="left:630px;top:141px;width:1250px;height:805px;overflow:hidden"><div class="code" style="left:9px;top:-19.5px">    <span class="k">private</span> <span class="k">static</span> <span class="k">final</span> Operation[] operations = <span class="k">new</span> Operation[]{<span class="k">new</span> Operation(<span class="s">&quot;void bind(java.lang.String, java.rmi.Remote)&quot;</span>), <span class="k">new</span> Operation(<span class="s">&quot;java.lang.String list()[]&quot;</span>), <span class="k">new</span> Operation(<span class="s">&quot;java.rmi.Remote lookup(java.lang.String)&quot;</span>)};
    <span class="k">private</span> <span class="k">static</span> <span class="k">final</span> <span class="k">long</span> interfaceHash = <span class="n">4905912898345647071L</span>;

    <span class="k">public</span> RegistryImpl_Skel() {
    }

    <span class="k">public</span> <span class="k">void</span> dispatch(Remote var1, RemoteCall var2, <span class="k">int</span> var3, <span class="k">long</span> var4) <span class="k">throws</span> Exception {
        <span class="k">if</span> (var4 != <span class="n">4905912898345647071L</span>) {
            <span class="k">throw</span> <span class="k">new</span> SkeletonMismatchException(<span class="s">&quot;interface hash mismatch&quot;</span>);
        } <span class="k">else</span> {
            RegistryImpl var6 = (RegistryImpl)var1;
            String var7;
            Remote var8;
            ObjectInput var10;
            ObjectInput var11;
            <span class="k">switch</span>(var3) {
            <span class="k">case</span> <span class="n">0</span>:
                <span class="k">try</span> {
                    var11 = var2.getInputStream();
                    var7 = (String)var11.readObject();
                    var8 = (Remote)var11.readObject();
                } <span class="k">catch</span> (IOException var94) {
                    <span class="k">throw</span> <span class="k">new</span> UnmarshalException(<span class="s">&quot;error unmarshalling arguments&quot;</span>, var94);
                } <span class="k">catch</span> (ClassNotFoundException var95) {
                    <span class="k">throw</span> <span class="k">new</span> UnmarshalException(<span class="s">&quot;error unmarshalling arguments&quot;</span>, var95);
                } <span class="k">finally</span> {
                    var2.releaseInputStream();
                }

                var6.bind(var7, var8);
</div></div>
<div class="code" style="left:510px;top:150.0px;width:44px;text-align:right;font-size:19.5px;letter-spacing:-0.7px;color:#999999;line-height:27.5px">21
22
23
24
25
26
27
28
29
30
31
32
33
34
35
36
37
38
39
40
41
42
43
44
45
46
47
48
49</div>
<div class="b" style="left:926px;top:421px;width:2px;height:28px;background:#000;"></div>
<svg class="b" style="left:589px;top:671px" width="21" height="21" viewBox="0 0 21 21"><circle cx="10.5" cy="10.5" r="9.5" fill="#db5860"/></svg>
<svg class="b" style="left:563px;top:285px" width="23" height="24" viewBox="0 0 23 24"><circle cx="7.8" cy="11" r="7" fill="#87c873"/><path d="M5.5 7 H10 M5.5 14.8 H10 M7.75 7 V14.8" stroke="#2d3a2a" stroke-width="1.6"/><path d="M17 22.5 V6" stroke="#db4d5b" stroke-width="2"/><polygon points="13.6,6 20.4,6 17,1" fill="#db4d5b"/></svg>
<span class="t" style="left:589.80px;top:284.81px;font-size:19px;color:#606060;font-weight:700;">@</span>
<svg class="b" style="left:622px;top:208px" width="16" height="19" viewBox="0 0 16 19"><path d="M0.5 0.5 H15.5 V10 L8 17.5 L0.5 10 Z" fill="#fff" stroke="#cfcfcf"/><path d="M4 6 H12" stroke="#c8c8c8"/></svg>
<svg class="b" style="left:622px;top:233px" width="16" height="19" viewBox="0 0 16 19"><path d="M0.5 17.5 H15.5 V8 L8 0.5 L0.5 8 Z" fill="#fff" stroke="#cfcfcf"/><path d="M4 12 H12" stroke="#c8c8c8"/></svg>
<svg class="b" style="left:622px;top:291px" width="16" height="19" viewBox="0 0 16 19"><path d="M0.5 0.5 H15.5 V10 L8 17.5 L0.5 10 Z" fill="#fff" stroke="#cfcfcf"/><path d="M4 6 H12" stroke="#c8c8c8"/></svg>
<svg class="b" style="left:622px;top:318px" width="16" height="19" viewBox="0 0 16 19"><path d="M0.5 0.5 H15.5 V10 L8 17.5 L0.5 10 Z" fill="#fff" stroke="#cfcfcf"/><path d="M4 6 H12" stroke="#c8c8c8"/></svg>
<svg class="b" style="left:622px;top:371px" width="16" height="19" viewBox="0 0 16 19"><path d="M0.5 17.5 H15.5 V8 L8 0.5 L0.5 8 Z" fill="#fff" stroke="#cfcfcf"/><path d="M4 12 H12" stroke="#c8c8c8"/></svg>
<svg class="b" style="left:622px;top:538px" width="16" height="19" viewBox="0 0 16 19"><path d="M0.5 0.5 H15.5 V10 L8 17.5 L0.5 10 Z" fill="#fff" stroke="#cfcfcf"/><path d="M4 6 H12" stroke="#c8c8c8"/></svg>
<svg class="b" style="left:622px;top:593px" width="16" height="19" viewBox="0 0 16 19"><path d="M0.5 0.5 H15.5 V10 L8 17.5 L0.5 10 Z" fill="#fff" stroke="#cfcfcf"/><path d="M4 6 H12" stroke="#c8c8c8"/></svg>
<svg class="b" style="left:622px;top:703px" width="16" height="19" viewBox="0 0 16 19"><path d="M0.5 0.5 H15.5 V10 L8 17.5 L0.5 10 Z" fill="#fff" stroke="#cfcfcf"/><path d="M4 6 H12" stroke="#c8c8c8"/></svg>
<svg class="b" style="left:622px;top:756px" width="16" height="19" viewBox="0 0 16 19"><path d="M0.5 17.5 H15.5 V8 L8 0.5 L0.5 8 Z" fill="#fff" stroke="#cfcfcf"/><path d="M4 12 H12" stroke="#c8c8c8"/></svg>
<svg class="b" style="left:622px;top:811px" width="16" height="19" viewBox="0 0 16 19"><path d="M0.5 17.5 H15.5 V8 L8 0.5 L0.5 8 Z" fill="#fff" stroke="#cfcfcf"/><path d="M4 12 H12" stroke="#c8c8c8"/></svg>
<svg class="b" style="left:622px;top:866px" width="16" height="19" viewBox="0 0 16 19"><path d="M0.5 17.5 H15.5 V8 L8 0.5 L0.5 8 Z" fill="#fff" stroke="#cfcfcf"/><path d="M4 12 H12" stroke="#c8c8c8"/></svg>
<div class="b" style="left:857px;top:647px;width:463px;height:54px;background:transparent;border:3px solid #fd2e2e"></div>
<div class="b" style="left:1881px;top:189px;width:12px;height:177px;background:#e0e0e0;border:1px solid #d0d0d0"></div>
<div class="b" style="left:1876px;top:306px;width:17px;height:2px;background:#f4c4c4;"></div>
<div class="b" style="left:512px;top:946px;width:1382px;height:30px;background:#f0f0f0;"></div>
<div class="b" style="left:512px;top:946px;width:1382px;height:1px;background:#dcdcdc;"></div>
<span class="t" style="left:643.00px;top:953.52px;font-size:16px;color:#555555;letter-spacing:0.014px;">RegistryImpl_Skel</span>
<svg class="b" style="left:785px;top:955px" width="6" height="10" viewBox="0 0 6 10"><path d="M0.8 0.8 L4.8 5 L0.8 9.2" fill="none" stroke="#9a9a9a" stroke-width="1.1"/></svg>
<span class="t" style="left:801.50px;top:953.52px;font-size:16px;color:#555555;letter-spacing:0.064px;">dispatch()</span>
<div class="b" style="left:512px;top:976px;width:1408px;height:1px;background:#c9c9c9;"></div>
<div class="b" style="left:0px;top:976px;width:512px;height:1px;background:#c9c9c9;"></div>
<div class="b" style="left:1894px;top:72px;width:26px;height:904px;background:#f2f2f2;"></div>
<div class="b" style="left:1894px;top:72px;width:1px;height:904px;background:#c9c9c9;"></div>
<svg class="b" style="left:1901px;top:85px" width="15" height="16" viewBox="0 0 15 16"><rect x="4.8" y="1.2" width="5.1" height="4.8" fill="#6e6e6e"/><rect x="1" y="10.1" width="4.9" height="4.9" fill="#6e6e6e"/><rect x="8.5" y="10.1" width="4.9" height="4.9" fill="#6e6e6e"/><path d="M7.35 6 V7.6 H3.45 V10.1 M7.35 7.6 H10.95 V10.1" fill="none" stroke="#8e8e8e" stroke-width="1.1"/></svg>
<div class="b" style="left:1877.20px;top:125.40px;width:58.60px;height:20px;transform:rotate(90deg)"><span class="t" style="left:-1.00px;top:2.23px;font-size:14px;letter-spacing:-0.038px;color:#000">Hierarchy</span></div>
<svg class="b" style="left:1901px;top:190px" width="15" height="18" viewBox="0 0 15 18"><ellipse cx="7" cy="3.2" rx="7" ry="2.7" fill="#737373"/><path d="M0 5.6 Q0 7.8 7 7.8 Q14 7.8 14 5.6 V7.6 Q14 10 7 10 Q0 10 0 7.6 Z M0 9.4 Q0 11.6 7 11.6 Q14 11.6 14 9.4 V11.4 Q14 13.8 7 13.8 Q0 13.8 0 11.4 Z M0 13.2 Q0 15.4 7 15.4 Q14 15.4 14 13.2 V14.6 Q14 17 7 17 Q0 17 0 14.6 Z" fill="#737373"/></svg>
<div class="b" style="left:1878.50px;top:231.60px;width:56.00px;height:20px;transform:rotate(90deg)"><span class="t" style="left:-1.00px;top:2.23px;font-size:14px;letter-spacing:-0.449px;color:#000">Database</span></div>
<svg class="b" style="left:1900px;top:296px" width="15" height="16" viewBox="0 0 15 16"><ellipse cx="7.5" cy="10" rx="3.5" ry="5" fill="#6e6e6e"/><circle cx="7.5" cy="4" r="2.5" fill="#6e6e6e"/><path d="M1 2 L4 6 M14 2 L11 6 M0.5 9 H4 M14.5 9 H11 M1 15 L4 12 M14 15 L11 12" stroke="#6e6e6e" stroke-width="1.3"/></svg>
<div class="b" style="left:1895.80px;top:317.30px;width:21.40px;height:20px;transform:rotate(90deg)"><span class="t" style="left:0.00px;top:2.23px;font-size:14px;letter-spacing:0.138px;color:#000">Ant</span></div>
<div class="b" style="left:0px;top:977px;width:1920px;height:27px;background:#f2f2f2;"></div>
<div class="b" style="left:0px;top:1004px;width:1920px;height:1px;background:#939393;"></div>
<svg class="b" style="left:39px;top:984px" width="17" height="17" viewBox="0 0 17 17"><circle cx="6.6" cy="6.8" r="5" fill="none" stroke="#6e6e6e" stroke-width="2.2"/><path d="M10.2 10.4 L14.6 14.8" stroke="#6e6e6e" stroke-width="2.4"/></svg>
<span class="t" style="left:60.10px;top:985.33px;font-size:14px;color:#000;letter-spacing:-0.286px;">3: Find</span>
<div class="b" style="left:60px;top:998px;width:8px;height:1px;background:#000;"></div>
<svg class="b" style="left:128px;top:987px" width="12" height="13" viewBox="0 0 12 13"><polygon points="0.5,0.5 11.5,6.5 0.5,12.5" fill="#6e6e6e"/></svg>
<span class="t" style="left:147.40px;top:985.33px;font-size:14px;color:#000;letter-spacing:-0.312px;">4: Run</span>
<div class="b" style="left:147px;top:998px;width:8px;height:1px;background:#000;"></div>
<svg class="b" style="left:211.5px;top:984.5px" width="16" height="16" viewBox="0 0 16 16"><g transform="scale(0.82)"><path d="M3.5 7 Q3.5 3.3 9 3.3 Q14.5 3.3 14.5 7 V14 Q14.5 18.8 9 18.8 Q3.5 18.8 3.5 14 Z" fill="#6e6e6e"/><path d="M1.5 7.7 H16.5 M1.5 11.6 H16.5 M1.5 15.5 H16.5" stroke="#6e6e6e" stroke-width="2" stroke-linecap="round"/><path d="M6 1.5 L8 4 M12 1.5 L10 4" stroke="#6e6e6e" stroke-width="1.8" stroke-linecap="round"/></g></svg>
<span class="t" style="left:232.50px;top:985.33px;font-size:14px;color:#000;letter-spacing:0.009px;">5: Debug</span>
<div class="b" style="left:232px;top:998px;width:8px;height:1px;background:#000;"></div>
<svg class="b" style="left:317.5px;top:986px" width="14" height="12" viewBox="0 0 14 12"><path d="M0 1.5 H2.4 M0 5.4 H2.4 M0 9.3 H2.4 M4 1.5 H13.2 M4 5.4 H13.2 M4 9.3 H13.2" stroke="#6e6e6e" stroke-width="2"/></svg>
<span class="t" style="left:336.00px;top:985.33px;font-size:14px;color:#000;letter-spacing:-0.361px;">6: TODO</span>
<div class="b" style="left:336px;top:998px;width:8px;height:1px;background:#000;"></div>
<svg class="b" style="left:417px;top:985px" width="15" height="14" viewBox="0 0 15 14"><rect x="0" y="0" width="15" height="13" fill="#6e6e6e"/><path d="M3 3 L6 5.5 L3 8 M7 10 H11" fill="none" stroke="#f2f2f2" stroke-width="1.3"/></svg>
<span class="t" style="left:438.50px;top:985.33px;font-size:14px;color:#000;letter-spacing:-0.185px;">Terminal</span>
<svg class="b" style="left:1799px;top:984px" width="17" height="16" viewBox="0 0 17 16"><path d="M8 0.8 A7.2 7.2 0 1 0 8 15.2 H15.2 V8 A7.2 7.2 0 0 0 8 0.8 Z" fill="none" stroke="#6e6e6e" stroke-width="1.6"/></svg>
<span class="t" style="left:1819.40px;top:985.33px;font-size:14px;color:#000;letter-spacing:-0.133px;">Event Log</span>
<div class="b" style="left:0px;top:1005px;width:1920px;height:25px;background:#f2f2f2;"></div>
<svg class="b" style="left:7px;top:1010px" width="17" height="16" viewBox="0 0 17 16"><rect x="4.5" y="0.5" width="12" height="12" fill="none" stroke="#7a7a7a"/><path d="M0.5 3.5 V15.5 H12.5" fill="none" stroke="#7a7a7a"/></svg>
<span class="t" style="left:34.50px;top:1008.52px;font-size:16px;color:#000;letter-spacing:0.200px;">All files are up-to-date (9 minutes ago)</span>
<span class="t" style="left:1749.00px;top:1008.52px;font-size:16px;color:#000;letter-spacing:-0.160px;">31:25</span>
<span class="t" style="left:1802.87px;top:1008.52px;font-size:16px;color:#888888;transform:scaleX(0.8269);transform-origin:0 0;">LF</span>
<span class="t" style="left:1833.50px;top:1008.52px;font-size:16px;color:#888888;letter-spacing:-0.582px;">UTF-8</span>
<svg class="b" style="left:1891px;top:1009px" width="16" height="17" viewBox="0 0 16 17"><rect x="2.6" y="0" width="10.4" height="5.4" rx="2" fill="#c4c4c4"/><rect x="0" y="4.4" width="15.5" height="1.4" fill="#c4c4c4"/><ellipse cx="7.8" cy="8.6" rx="4.4" ry="3.6" fill="#c4c4c4"/><path d="M1.6 16 Q1.8 12.2 7.8 12.2 Q13.8 12.2 14 16 Z" fill="#c4c4c4"/></svg>
</body></html>
